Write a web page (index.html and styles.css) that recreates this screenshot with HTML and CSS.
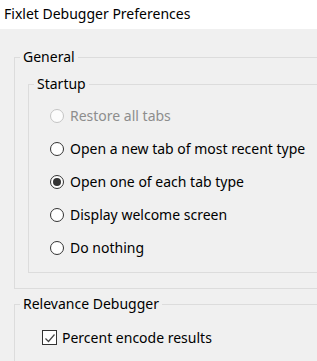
FILE: index.html
```html
<!DOCTYPE html>
<html lang="en">
<head>
    <meta charset="UTF-8">
    <meta name="viewport" content="width=device-width, initial-scale=1.0">
    <title>Fixlet Debugger Preferences</title>
    <link rel="stylesheet" href="styles.css">
</head>
<body>

    <!-- Barra de titulo -->
    <div class="titlebar">Fixlet Debugger Preferences</div>

    <div class="content">
        <fieldset class="group general">
            <legend>General</legend>

            <fieldset class="group startup">
                <legend>Startup</legend>
                <div class="options">
                    <label class="option disabled">
                        <input type="radio" name="startup" disabled>
                        <span>Restore all tabs</span>
                    </label>
                    <label class="option">
                        <input type="radio" name="startup">
                        <span>Open a new tab of most recent type</span>
                    </label>
                    <label class="option">
                        <input type="radio" name="startup" checked>
                        <span>Open one of each tab type</span>
                    </label>
                    <label class="option">
                        <input type="radio" name="startup">
                        <span>Display welcome screen</span>
                    </label>
                    <label class="option">
                        <input type="radio" name="startup">
                        <span>Do nothing</span>
                    </label>
                </div>
            </fieldset>
        </fieldset>

        <fieldset class="group relevance">
            <legend>Relevance Debugger</legend>
            <div class="options">
                <label class="option check">
                    <span class="box">
                        <svg width="12" height="12" viewBox="0 0 12 12"><path d="M1.5 6.5 L4.5 9.5 L10.5 2.5" fill="none" stroke="#444" stroke-width="1.2"/></svg>
                    </span>
                    <span>Percent encode results</span>
                </label>
            </div>
        </fieldset>
    </div>

</body>
</html>
```

FILE: styles.css
```css
body {
    margin: 0;
    background-color: #f0f0f0;
    font-family: "Noto Sans", "Open Sans", sans-serif;
    font-size: 14px;
    color: #000;
    overflow: hidden;
}
.titlebar {
    height: 29px;
    line-height: 28px;
    background: #fff;
    padding-left: 4px;
}
.content {
    padding-left: 14px;
}
/* Grupos */
.group {
    border: 1px solid #dcdcdc;
    margin: 0;
    padding-left: 5px;
    padding-right: 0;
    min-width: 0;
}
.group legend {
    padding: 0 3px;
    margin: 0;
    line-height: 20px;
    height: 20px;
}
.general {
    margin-top: 18px;
    margin-right: -60px;
    padding-top: 7px;
    padding-bottom: 15px;
}
.general > .startup {
    margin-left: 8px;
}
.startup {
    padding-top: 5px;
    padding-bottom: 8px;
}
.startup .options {
    margin-left: 16px;
}
.relevance {
    margin-top: 5px;
    margin-right: -60px;
    padding-top: 7px;
    padding-bottom: 20px;
}
.relevance .options {
    margin-left: 22px;
}
/* Opcoes */
.option {
    display: flex;
    align-items: center;
    height: 33px;
    gap: 6px;
    white-space: nowrap;
}
.option input[type="radio"] {
    appearance: none;
    -webkit-appearance: none;
    width: 14px;
    height: 14px;
    margin: 0;
    border: 1px solid #333;
    border-radius: 50%;
    background: #fff;
    display: grid;
    place-content: center;
    flex-shrink: 0;
}
.option input[type="radio"]:checked::before {
    content: "";
    width: 8px;
    height: 8px;
    border-radius: 50%;
    background: #333;
}
.option.disabled {
    color: #8d8d8d;
}
.option.disabled input[type="radio"] {
    border-color: #c4c4c4;
    background: #fcfcfc;
}
.check {
    gap: 5px;
}
.box {
    width: 13px;
    height: 13px;
    border: 1px solid #333;
    background: #fff;
    display: grid;
    place-content: center;
    flex-shrink: 0;
}
.box svg {
    display: block;
}
```
